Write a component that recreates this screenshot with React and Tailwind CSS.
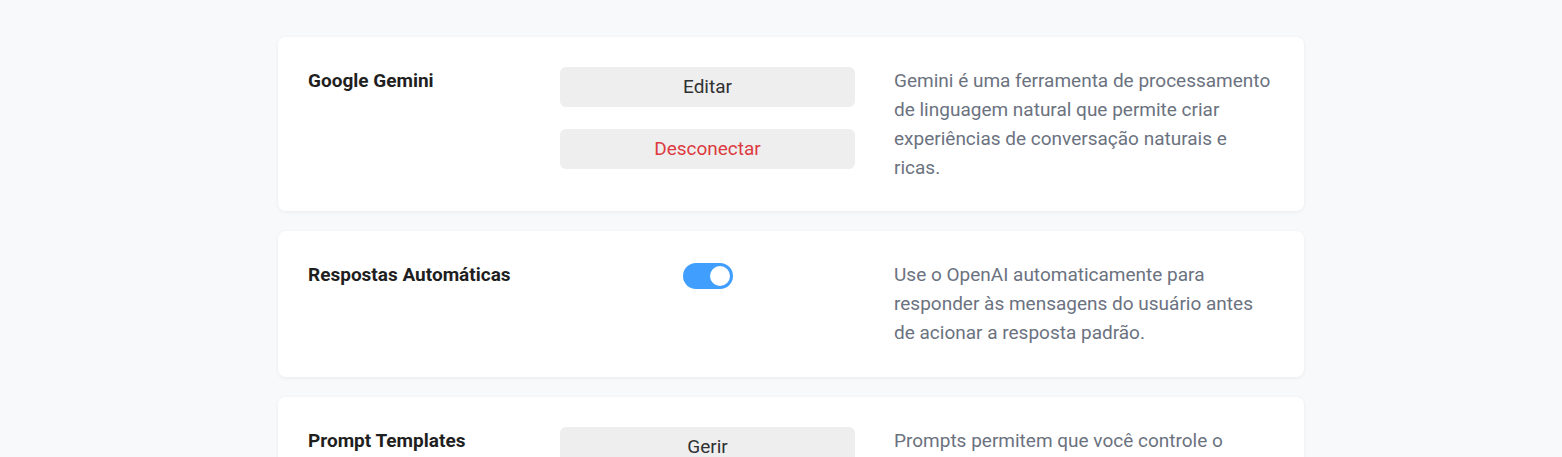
import { useState } from 'react';

const font = { fontFamily: 'Roboto, "Liberation Sans", sans-serif' };

function Card({ title, children, description, className = '' }) {
  return (
    <div className={'flex rounded-lg bg-white p-[29px] pl-[30px] shadow-[0_1px_4px_rgba(0,0,0,0.06)] ' + className}>
      <div className="w-[252px] shrink-0 text-[19px] leading-[29px] font-bold text-[#1f1f1f]">{title}</div>
      <div className="w-[295px] shrink-0">{children}</div>
      <p className="ml-[39px] w-[380px] shrink-0 text-[19px] leading-[29px] text-[#6b7280]">{description}</p>
    </div>
  );
}

function Button({ children, danger }) {
  return (
    <button
      className={
        'block h-[40px] w-full rounded-md bg-[#eeeeee] text-[19px] ' +
        (danger ? 'text-[#dc3a3f]' : 'text-[#303133]')
      }
    >
      {children}
    </button>
  );
}

export default function App() {
  const [auto, setAuto] = useState(true);

  return (
    <div className="min-h-screen bg-[#f8f9fb] pt-[37px] pb-10" style={font}>
      <div className="ml-[278px] flex w-[1026px] flex-col gap-5">
        <Card
          title="Google Gemini"
          description="Gemini é uma ferramenta de processamento de linguagem natural que permite criar experiências de conversação naturais e ricas."
        >
          <div className="flex flex-col gap-[22px] pt-[1px]">
            <Button>Editar</Button>
            <Button danger>Desconectar</Button>
          </div>
        </Card>

        <Card
          className="min-h-[146px]"
          title="Respostas Automáticas"
          description="Use o OpenAI automaticamente para responder às mensagens do usuário antes de acionar a resposta padrão."
        >
          <div className="flex justify-center pt-[3px]">
            <button
              onClick={() => setAuto((v) => !v)}
              className={
                'flex h-[26px] w-[50px] items-center rounded-full px-[3px] ' +
                (auto ? 'justify-end bg-[#409eff]' : 'justify-start bg-[#dcdfe6]')
              }
            >
              <span className="h-[20px] w-[20px] rounded-full bg-white" />
            </button>
          </div>
        </Card>

        <Card
          title="Prompt Templates"
          description="Prompts permitem que você controle o comportamento e o tom das respostas geradas pela inteligência artificial."
        >
          <div className="pt-[1px]">
            <Button>Gerir</Button>
          </div>
        </Card>
      </div>
    </div>
  );
}
